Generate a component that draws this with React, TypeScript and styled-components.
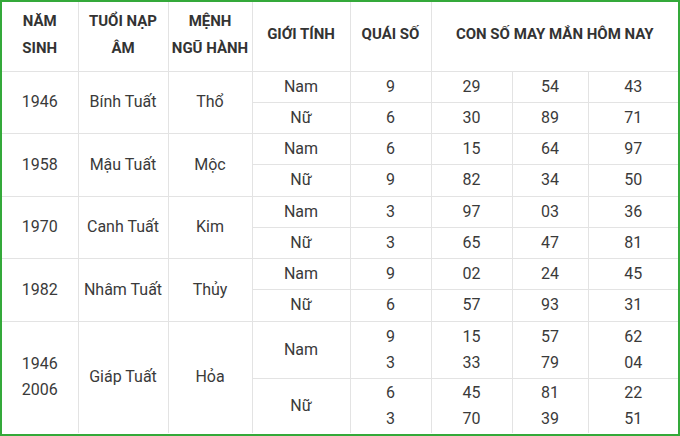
import React from 'react';
import styled, { createGlobalStyle } from 'styled-components';

type Sub = { gender: string; quai: string; nums: [string, string, string]; height: number };
type Group = { year: string; napAm: string; menh: string; subs: Sub[] };

const groups: Group[] = [
  {
    year: '1946',
    napAm: 'Bính Tuất',
    menh: 'Thổ',
    subs: [
      { gender: 'Nam', quai: '9', nums: ['29', '54', '43'], height: 31 },
      { gender: 'Nữ', quai: '6', nums: ['30', '89', '71'], height: 31 },
    ],
  },
  {
    year: '1958',
    napAm: 'Mậu Tuất',
    menh: 'Mộc',
    subs: [
      { gender: 'Nam', quai: '6', nums: ['15', '64', '97'], height: 31 },
      { gender: 'Nữ', quai: '9', nums: ['82', '34', '50'], height: 32 },
    ],
  },
  {
    year: '1970',
    napAm: 'Canh Tuất',
    menh: 'Kim',
    subs: [
      { gender: 'Nam', quai: '3', nums: ['97', '03', '36'], height: 31 },
      { gender: 'Nữ', quai: '3', nums: ['65', '47', '81'], height: 31 },
    ],
  },
  {
    year: '1982',
    napAm: 'Nhâm Tuất',
    menh: 'Thủy',
    subs: [
      { gender: 'Nam', quai: '9', nums: ['02', '24', '45'], height: 31 },
      { gender: 'Nữ', quai: '6', nums: ['57', '93', '31'], height: 32 },
    ],
  },
  {
    year: '1946\n2006',
    napAm: 'Giáp Tuất',
    menh: 'Hỏa',
    subs: [
      { gender: 'Nam', quai: '9\n3', nums: ['15\n33', '57\n79', '62\n04'], height: 57 },
      { gender: 'Nữ', quai: '6\n3', nums: ['45\n70', '81\n39', '22\n51'], height: 55 },
    ],
  },
];

const widths = [76, 90, 84, 98, 81, 81, 76, 90];

export default function App() {
  return (
    <>
      <GlobalStyle />
      <Frame>
        <Table>
          <colgroup>
            {widths.map((w, i) => (
              <col key={i} style={{ width: w }} />
            ))}
          </colgroup>
          <thead>
            <HeadRow>
              <Th>NĂM<br />SINH</Th>
              <Th>TUỔI NẠP<br />ÂM</Th>
              <Th>MỆNH<br />NGŨ HÀNH</Th>
              <Th>GIỚI TÍNH</Th>
              <Th>QUÁI SỐ</Th>
              <Th colSpan={3}>CON SỐ MAY MẮN HÔM NAY</Th>
            </HeadRow>
          </thead>
          <tbody>
            {groups.map(g =>
              g.subs.map((s, i) => (
                <Row key={g.year + s.gender} $h={s.height}>
                  {i === 0 && (
                    <>
                      <Td rowSpan={2}>{g.year}</Td>
                      <Td rowSpan={2}>{g.napAm}</Td>
                      <Td rowSpan={2}>{g.menh}</Td>
                    </>
                  )}
                  <Td>{s.gender}</Td>
                  <Td>{s.quai}</Td>
                  {s.nums.map((n, k) => (
                    <Td key={k}>{n}</Td>
                  ))}
                </Row>
              ))
            )}
          </tbody>
        </Table>
      </Frame>
    </>
  );
}

const GlobalStyle = createGlobalStyle`
  html, body {
    margin: 0;
    padding: 0;
    background: #ffffff;
  }
`;

const Frame = styled.div`
  width: 680px;
  height: 436px;
  box-sizing: border-box;
  border: 2px solid #34a93a;
  overflow: hidden;
  background: #ffffff;
  font-family: Roboto, 'Noto Sans', sans-serif;
`;

const Table = styled.table`
  width: 676px;
  table-layout: fixed;
  border-collapse: collapse;
  border-style: hidden;
`;

const HeadRow = styled.tr`
  height: 69px;
`;

const Th = styled.th`
  border: 1px solid #e3e3e3;
  padding: 0 0 3px;
  font-size: 15px;
  font-weight: 700;
  line-height: 27px;
  color: #333333;
  text-align: center;
  vertical-align: middle;
`;

const Row = styled.tr<{ $h: number }>`
  height: ${p => p.$h}px;
`;

const Td = styled.td`
  border: 1px solid #e3e3e3;
  padding: 0;
  font-size: 16px;
  line-height: 26px;
  color: #3a3a3a;
  text-align: center;
  vertical-align: middle;
  white-space: pre-line;
`;
